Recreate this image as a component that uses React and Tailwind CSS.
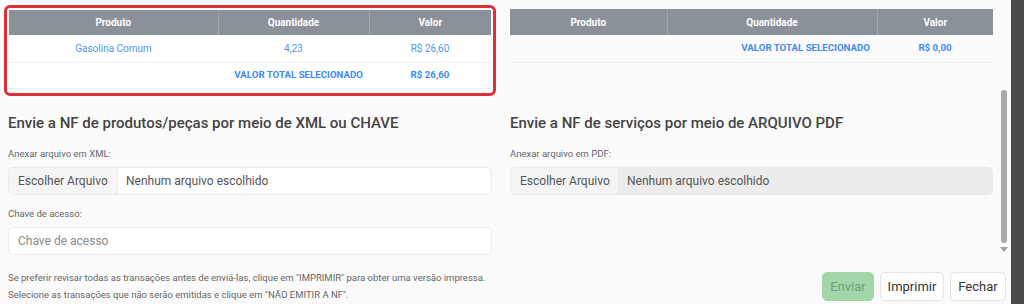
import React from "react";

const font = { fontFamily: "Roboto, 'Liberation Sans', sans-serif" };

function FileInput({ disabled }) {
  return (
    <div
      className={`flex h-[28px] items-center overflow-hidden rounded-[5px] border border-[#ebebeb] text-[12px] whitespace-nowrap ${
        disabled ? "bg-[#ececed]" : "bg-white"
      }`}
    >
      <div
        className={`flex h-full shrink-0 items-center border-r border-[#ebebeb] px-[9px] text-[#555] ${
          disabled ? "bg-[#f4f4f5] w-[108px]" : "bg-[#f5f5f5] w-[109px]"
        }`}
      >
        Escolher Arquivo
      </div>
      <div className="pl-[8px] text-[#555]">Nenhum arquivo escolhido</div>
    </div>
  );
}

export default function App() {
  return (
    <div className="flex h-[304px] w-[1024px] overflow-hidden bg-[#fbfbfb]" style={font}>
      <div className="flex w-[1011px] flex-col">
        {/* scroll area */}
        <div className="flex h-[262px]">
          <div className="grid flex-1 grid-cols-[484px_483px] content-start gap-x-[18px] pl-[8px]">
            {/* left table with highlight */}
            <div className="mt-[9px] self-start rounded-[2px] p-px pb-[3px] outline-[3px] outline-offset-[1px] outline-solid outline-[#dd2f36]">
              <table className="w-full table-fixed border-collapse whitespace-nowrap">
                <colgroup>
                  <col className="w-[209px]" />
                  <col className="w-[151px]" />
                  <col />
                </colgroup>
                <thead className="bg-[#8b9198] text-[10px] font-bold text-white">
                  <tr className="h-[25px]">
                    <th className="border-r border-[#a3a8ae] p-0 text-center">Produto</th>
                    <th className="border-r border-[#a3a8ae] p-0 text-center">Quantidade</th>
                    <th className="p-0 text-center">Valor</th>
                  </tr>
                </thead>
                <tbody className="bg-white text-[10px] text-[#4f96ee]">
                  <tr className="h-[27px] border-b border-[#efefef]">
                    <td className="text-center">Gasolina Comum</td>
                    <td className="text-center">4,23</td>
                    <td className="text-center">R$ 26,60</td>
                  </tr>
                  <tr className="h-[26px] border-b border-[#efefef] text-[9.7px] font-bold text-[#3c8cf0]">
                    <td></td>
                    <td className="pr-[6px] text-right">VALOR TOTAL SELECIONADO</td>
                    <td className="text-center">R$ 26,60</td>
                  </tr>
                </tbody>
              </table>
            </div>

            {/* right table */}
            <div className="mt-[9px] self-start">
              <table className="w-full table-fixed border-collapse whitespace-nowrap">
                <colgroup>
                  <col className="w-[157px]" />
                  <col className="w-[210px]" />
                  <col />
                </colgroup>
                <thead className="bg-[#8b9198] text-[10px] font-bold text-white">
                  <tr className="h-[26px]">
                    <th className="border-r border-[#a3a8ae] p-0 text-center">Produto</th>
                    <th className="border-r border-[#a3a8ae] p-0 text-center">Quantidade</th>
                    <th className="p-0 text-center">Valor</th>
                  </tr>
                </thead>
                <tbody className="text-[9.7px] font-bold text-[#3c8cf0]">
                  <tr className="h-[27px] border-b border-[#efefef]">
                    <td></td>
                    <td className="pr-[7px] text-right">VALOR TOTAL SELECIONADO</td>
                    <td className="text-center">R$ 0,00</td>
                  </tr>
                </tbody>
              </table>
            </div>

            {/* left form */}
            <div className="flex flex-col">
              <h2 className="mt-[19px] text-[15px] leading-[24px] font-medium text-[#444]">
                Envie a NF de produtos/peças por meio de XML ou CHAVE
              </h2>
              <label className="mt-[12px] text-[9.5px] leading-[14px] text-[#666]">
                Anexar arquivo em XML:
              </label>
              <div className="mt-[6px]">
                <FileInput />
              </div>
              <label className="mt-[12px] text-[9.5px] leading-[14px] text-[#666]">
                Chave de acesso:
              </label>
              <div className="mt-[6px] flex h-[28px] items-center rounded-[5px] border border-[#ebebeb] bg-white px-[9px] text-[12px] text-[#8a8a8a]">
                Chave de acesso
              </div>
            </div>

            {/* right form */}
            <div className="flex flex-col">
              <h2 className="mt-[19px] text-[15px] leading-[24px] font-medium text-[#444]">
                Envie a NF de serviços por meio de ARQUIVO PDF
              </h2>
              <label className="mt-[12px] text-[9.5px] leading-[14px] text-[#666]">
                Anexar arquivo em PDF:
              </label>
              <div className="mt-[6px]">
                <FileInput disabled />
              </div>
            </div>
          </div>

          {/* scrollbar */}
          <div className="flex w-[15px] flex-col items-center pt-[90px]">
            <div className="h-[153px] w-[6px] rounded-full bg-[#a9a9a9]" />
            <div className="mt-[4px] h-0 w-0 border-x-[4px] border-t-[5px] border-x-transparent border-t-[#a0a0a0]" />
          </div>
        </div>

        {/* footer */}
        <div className="flex flex-1 items-start justify-between pl-[8px] pr-[5px]">
          <div className="pt-[7px] text-[9.5px] leading-[17px] text-[#666]">
            <p>
              Se preferir revisar todas as transações antes de enviá-las, clique em "IMPRIMIR" para obter uma versão impressa.
            </p>
            <p>Selecione as transações que não serão emitidas e clique em "NÃO EMITIR A NF".</p>
          </div>
          <div className="flex gap-[6px] pt-[10px]">
            <button className="h-[29px] w-[52px] rounded-[5px] border border-[#9fd6a6] bg-[#a2d8a9] text-[13px] text-[#6f9e76]">
              Enviar
            </button>
            <button className="h-[29px] w-[64px] rounded-[5px] border border-[#e4e4e4] bg-white text-[13px] text-[#333]">
              Imprimir
            </button>
            <button className="h-[29px] w-[56px] rounded-[5px] border border-[#e4e4e4] bg-white text-[13px] text-[#333]">
              Fechar
            </button>
          </div>
        </div>
      </div>
      <div className="w-[13px] bg-[#4b4b4b]" />
    </div>
  );
}
